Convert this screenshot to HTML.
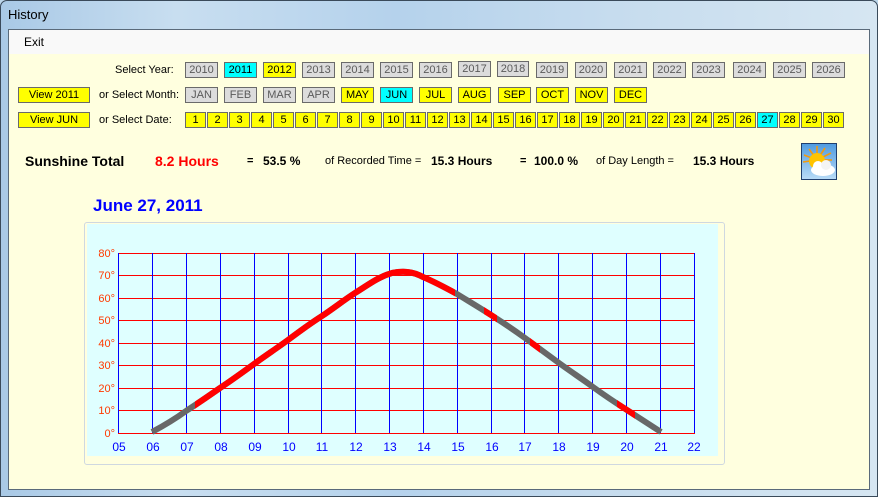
<!DOCTYPE html>
<html><head><meta charset="utf-8"><style>
*{margin:0;padding:0;box-sizing:border-box}
body{width:878px;height:497px;position:relative;overflow:hidden;font-family:"Liberation Sans",sans-serif;background:#bcd6ea}
.frame{position:absolute;left:0;top:0;width:878px;height:497px;background:linear-gradient(90deg,#a9c9e6 0%,#c8def0 20%,#b5d2ec 45%,#c6dcee 70%,#d6e6f2 100%);border:1px solid #3a4a5a;border-radius:7px 7px 0 0}
.title{position:absolute;left:8px;top:7px;font-size:13px;color:#000}
.client{position:absolute;left:8px;top:29px;width:862px;height:461px;background:#ffffdf;border:1px solid #5a6a7a}
.menu{position:absolute;left:0;top:0;width:860px;height:24px;background:#f9f9f9}
.menu span{position:absolute;left:15px;top:5px;font-size:12px}
.a{position:absolute}
.b{position:absolute;height:16px;border:1px solid #6a6a6a;font-size:11px;text-align:center;line-height:14px;color:#000}
.g{background:#dcdcdc;color:#5a5a5a}
.y{background:#ffff00}
.c{background:#00ffff}
.l{position:absolute;font-size:11px;color:#000}
</style></head><body>
<div class="frame"></div>
<div class="title">History</div>
<div class="client">
<div class="menu"><span>Exit</span></div>
</div>
<div class="l" style="left:115px;top:64px">Select Year:</div>
<div class="l" style="left:99px;top:89px">or Select Month:</div>
<div class="l" style="left:99px;top:114px">or Select Date:</div>
<div class="b y" style="left:18px;top:87px;width:72px">View 2011</div>
<div class="b y" style="left:18px;top:112px;width:72px">View JUN</div>

<div class="b g" style="left:185px;top:62px;width:33px">2010</div>
<div class="b c" style="left:224px;top:62px;width:33px">2011</div>
<div class="b y" style="left:263px;top:62px;width:33px">2012</div>
<div class="b g" style="left:302px;top:62px;width:33px">2013</div>
<div class="b g" style="left:341px;top:62px;width:33px">2014</div>
<div class="b g" style="left:380px;top:62px;width:33px">2015</div>
<div class="b g" style="left:419px;top:62px;width:33px">2016</div>
<div class="b g" style="left:458px;top:61px;width:33px">2017</div>
<div class="b g" style="left:497px;top:61px;width:32px">2018</div>
<div class="b g" style="left:536px;top:62px;width:32px">2019</div>
<div class="b g" style="left:575px;top:62px;width:32px">2020</div>
<div class="b g" style="left:614px;top:62px;width:33px">2021</div>
<div class="b g" style="left:653px;top:62px;width:33px">2022</div>
<div class="b g" style="left:692px;top:62px;width:33px">2023</div>
<div class="b g" style="left:733px;top:62px;width:33px">2024</div>
<div class="b g" style="left:773px;top:62px;width:33px">2025</div>
<div class="b g" style="left:812px;top:62px;width:33px">2026</div>

<div class="b g" style="left:185px;top:87px;width:33px">JAN</div>
<div class="b g" style="left:224px;top:87px;width:33px">FEB</div>
<div class="b g" style="left:263px;top:87px;width:33px">MAR</div>
<div class="b g" style="left:302px;top:87px;width:33px">APR</div>
<div class="b y" style="left:341px;top:87px;width:33px">MAY</div>
<div class="b c" style="left:380px;top:87px;width:33px">JUN</div>
<div class="b y" style="left:419px;top:87px;width:33px">JUL</div>
<div class="b y" style="left:458px;top:87px;width:33px">AUG</div>
<div class="b y" style="left:498px;top:87px;width:33px">SEP</div>
<div class="b y" style="left:536px;top:87px;width:33px">OCT</div>
<div class="b y" style="left:575px;top:87px;width:33px">NOV</div>
<div class="b y" style="left:614px;top:87px;width:33px">DEC</div>

<div class="b y" style="left:185px;top:112px;width:21px">1</div>
<div class="b y" style="left:207px;top:112px;width:21px">2</div>
<div class="b y" style="left:229px;top:112px;width:21px">3</div>
<div class="b y" style="left:251px;top:112px;width:21px">4</div>
<div class="b y" style="left:273px;top:112px;width:21px">5</div>
<div class="b y" style="left:295px;top:112px;width:21px">6</div>
<div class="b y" style="left:317px;top:112px;width:21px">7</div>
<div class="b y" style="left:339px;top:112px;width:21px">8</div>
<div class="b y" style="left:361px;top:112px;width:21px">9</div>
<div class="b y" style="left:383px;top:112px;width:21px">10</div>
<div class="b y" style="left:405px;top:112px;width:21px">11</div>
<div class="b y" style="left:427px;top:112px;width:21px">12</div>
<div class="b y" style="left:449px;top:112px;width:21px">13</div>
<div class="b y" style="left:471px;top:112px;width:21px">14</div>
<div class="b y" style="left:493px;top:112px;width:21px">15</div>
<div class="b y" style="left:515px;top:112px;width:21px">16</div>
<div class="b y" style="left:537px;top:112px;width:21px">17</div>
<div class="b y" style="left:559px;top:112px;width:21px">18</div>
<div class="b y" style="left:581px;top:112px;width:21px">19</div>
<div class="b y" style="left:603px;top:112px;width:21px">20</div>
<div class="b y" style="left:625px;top:112px;width:21px">21</div>
<div class="b y" style="left:647px;top:112px;width:21px">22</div>
<div class="b y" style="left:669px;top:112px;width:21px">23</div>
<div class="b y" style="left:691px;top:112px;width:21px">24</div>
<div class="b y" style="left:713px;top:112px;width:21px">25</div>
<div class="b y" style="left:735px;top:112px;width:21px">26</div>
<div class="b c" style="left:757px;top:112px;width:21px">27</div>
<div class="b y" style="left:779px;top:112px;width:21px">28</div>
<div class="b y" style="left:801px;top:112px;width:21px">29</div>
<div class="b y" style="left:823px;top:112px;width:21px">30</div>

<div class="a" style="left:25px;top:153px;font-size:14px;font-weight:bold">Sunshine Total</div>
<div class="a" style="left:155px;top:153px;font-size:14px;font-weight:bold;color:#ff0000">8.2 Hours</div>
<div class="a" style="left:247px;top:155px;font-size:11px;font-weight:bold">=</div>
<div class="a" style="left:263px;top:154px;font-size:12px;font-weight:bold">53.5 %</div>
<div class="a" style="left:325px;top:155px;font-size:11px">of Recorded Time =</div>
<div class="a" style="left:431px;top:154px;font-size:12px;font-weight:bold">15.3 Hours</div>
<div class="a" style="left:520px;top:155px;font-size:11px;font-weight:bold">=</div>
<div class="a" style="left:534px;top:154px;font-size:12px;font-weight:bold">100.0 %</div>
<div class="a" style="left:596px;top:155px;font-size:11px">of Day Length =</div>
<div class="a" style="left:693px;top:154px;font-size:12px;font-weight:bold">15.3 Hours</div>

<svg class="a" style="left:801px;top:143px" width="36" height="37" viewBox="0 0 36 37">
<defs><linearGradient id="sk" x1="0" y1="0" x2="0" y2="1"><stop offset="0" stop-color="#4f9be0"/><stop offset="1" stop-color="#b9dcf7"/></linearGradient></defs>
<rect x="0.5" y="0.5" width="35" height="36" fill="url(#sk)" stroke="#1f3f6f"/>
<g stroke="#f29a10" stroke-width="1.6">
<line x1="16" y1="17" x2="16" y2="3"/><line x1="16" y1="17" x2="8" y2="6"/><line x1="16" y1="17" x2="24" y2="5"/><line x1="16" y1="17" x2="3" y2="12"/><line x1="16" y1="17" x2="30" y2="10"/><line x1="16" y1="17" x2="2" y2="19"/><line x1="16" y1="17" x2="31" y2="17"/>
</g>
<circle cx="16" cy="18" r="8" fill="#ffc400"/>
<ellipse cx="22" cy="27" rx="12" ry="6" fill="#fff"/><circle cx="17" cy="23" r="5" fill="#fff"/><circle cx="25" cy="22" r="5" fill="#f4f4f4"/>
</svg>

<div class="a" style="left:93px;top:196px;font-size:17px;font-weight:bold;color:#0000ff">June 27, 2011</div>

<div class="a" style="left:84px;top:222px;width:641px;height:243px;border:1px solid #cfd8e0;border-radius:3px;background:#ffffdf"></div>
<div class="a" style="left:87px;top:224px;width:631px;height:232px;background:#dfffff"></div>
<svg class="a" style="left:0;top:0" width="878" height="497">
<defs><clipPath id="rc">
<rect x="195" y="0" width="260" height="497"/><rect x="484" y="0" width="13" height="497"/><rect x="530" y="0" width="10" height="497"/><rect x="617" y="0" width="18" height="497"/>
</clipPath></defs>
<g stroke="#ff0000" stroke-width="1">
<line x1="118" y1="253.5" x2="695" y2="253.5"/><line x1="118" y1="275.5" x2="695" y2="275.5"/><line x1="118" y1="298.5" x2="695" y2="298.5"/><line x1="118" y1="320.5" x2="695" y2="320.5"/><line x1="118" y1="343.5" x2="695" y2="343.5"/><line x1="118" y1="365.5" x2="695" y2="365.5"/><line x1="118" y1="388.5" x2="695" y2="388.5"/><line x1="118" y1="410.5" x2="695" y2="410.5"/><line x1="118" y1="433.5" x2="695" y2="433.5"/>
</g>
<g stroke="#0000ff" stroke-width="1">
<line x1="118.5" y1="253" x2="118.5" y2="433"/><line x1="152.5" y1="253" x2="152.5" y2="433"/><line x1="186.5" y1="253" x2="186.5" y2="433"/><line x1="220.5" y1="253" x2="220.5" y2="433"/><line x1="254.5" y1="253" x2="254.5" y2="433"/><line x1="288.5" y1="253" x2="288.5" y2="433"/><line x1="321.5" y1="253" x2="321.5" y2="433"/><line x1="355.5" y1="253" x2="355.5" y2="433"/><line x1="389.5" y1="253" x2="389.5" y2="433"/><line x1="423.5" y1="253" x2="423.5" y2="433"/><line x1="457.5" y1="253" x2="457.5" y2="433"/><line x1="491.5" y1="253" x2="491.5" y2="433"/><line x1="524.5" y1="253" x2="524.5" y2="433"/><line x1="558.5" y1="253" x2="558.5" y2="433"/><line x1="592.5" y1="253" x2="592.5" y2="433"/><line x1="626.5" y1="253" x2="626.5" y2="433"/><line x1="660.5" y1="253" x2="660.5" y2="433"/><line x1="694.5" y1="253" x2="694.5" y2="433"/>
</g>
<path d="M152,432 C165,425 175,419 186,411 C200,402 210,395 220,388 C232,380 243,372 254,364 C265,356 277,348 288,340 C300,331 311,323 322,316 C334,308 344,300 355,293 C368,285 378,277 392,273 C402,271 412,271 423,277 C435,282 446,288 457,294 C470,302 480,308 491,315 C502,322 514,330 525,338 C536,346 548,355 559,363 C570,371 582,379 593,387 C604,395 616,403 627,410 C638,417 650,425 661,432" fill="none" stroke="#686868" stroke-width="6"/>
<path d="M152,432 C165,425 175,419 186,411 C200,402 210,395 220,388 C232,380 243,372 254,364 C265,356 277,348 288,340 C300,331 311,323 322,316 C334,308 344,300 355,293 C368,285 378,277 392,273 C402,271 412,271 423,277 C435,282 446,288 457,294 C470,302 480,308 491,315 C502,322 514,330 525,338 C536,346 548,355 559,363 C570,371 582,379 593,387 C604,395 616,403 627,410 C638,417 650,425 661,432" fill="none" stroke="#ff0000" stroke-width="6" clip-path="url(#rc)"/>
<g font-family="Liberation Sans,sans-serif" font-size="11" fill="#ff3a00" text-anchor="end">
<text x="115" y="257">80°</text><text x="115" y="279">70°</text><text x="115" y="302">60°</text><text x="115" y="324">50°</text><text x="115" y="347">40°</text><text x="115" y="369">30°</text><text x="115" y="392">20°</text><text x="115" y="414">10°</text><text x="115" y="437">0°</text>
</g>
<g font-family="Liberation Sans,sans-serif" font-size="12" fill="#0000ff" text-anchor="middle">
<text x="119" y="451">05</text><text x="153" y="451">06</text><text x="187" y="451">07</text><text x="221" y="451">08</text><text x="255" y="451">09</text><text x="289" y="451">10</text><text x="322" y="451">11</text><text x="356" y="451">12</text><text x="390" y="451">13</text><text x="424" y="451">14</text><text x="458" y="451">15</text><text x="492" y="451">16</text><text x="525" y="451">17</text><text x="559" y="451">18</text><text x="593" y="451">19</text><text x="627" y="451">20</text><text x="661" y="451">21</text><text x="694" y="451">22</text>
</g>
</svg>
</body></html>
